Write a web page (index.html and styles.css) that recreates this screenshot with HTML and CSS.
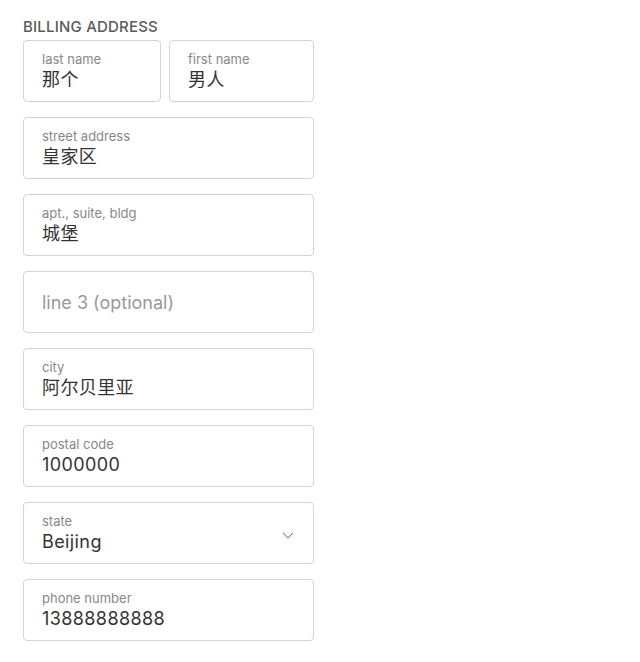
FILE: index.html
```html
<!DOCTYPE HTML>
<html>
<head>
    <title>Billing address</title>
    <meta charset="utf-8">
    <link rel="stylesheet" href="styles.css">
</head>
<body>
    <div class="billing">
        <h3>Billing Address</h3>
        <div class="row">
            <div class="field">
                <span class="label">last name</span>
                <span class="value">那个</span>
            </div>
            <div class="field">
                <span class="label">first name</span>
                <span class="value">男人</span>
            </div>
        </div>
        <div class="field">
            <span class="label">street address</span>
            <span class="value">皇家区</span>
        </div>
        <div class="field">
            <span class="label">apt., suite, bldg</span>
            <span class="value">城堡</span>
        </div>
        <div class="field empty">
            <span class="placeholder">line 3 (optional)</span>
        </div>
        <div class="field">
            <span class="label">city</span>
            <span class="value">阿尔贝里亚</span>
        </div>
        <div class="field">
            <span class="label">postal code</span>
            <span class="value">1000000</span>
        </div>
        <div class="field select">
            <div>
                <span class="label">state</span>
                <span class="value">Beijing</span>
            </div>
            <svg class="chevron" width="12" height="7" viewBox="0 0 12 7">
                <path d="M0.8 0.8 L6 5.8 L11.2 0.8" fill="none" stroke="#8a8a8a" stroke-width="1.1"/>
            </svg>
        </div>
        <div class="field">
            <span class="label">phone number</span>
            <span class="value">13888888888</span>
        </div>
    </div>
</body>
</html>
```

FILE: styles.css
```css
body
{
    margin: 0;
    background: #fff;
    font-family: Inter, "Noto Sans CJK SC", sans-serif;
    color: #333;
}

div.billing
{
    width: 291px;
    padding: 18px 0 0 23px;
    display: flex;
    flex-direction: column;
    gap: 15px;
}

div.billing h3
{
    margin: 0 0 -10px 0;
    font-size: 15px;
    line-height: 17px;
    font-weight: 500;
    letter-spacing: 0.2px;
    text-transform: uppercase;
    color: #5a5a5a;
}

div.row
{
    display: flex;
    gap: 8px;
}

div.row div.field:first-child { width: 138px; flex: none; }
div.row div.field:last-child { flex: 1; }

div.field
{
    box-sizing: border-box;
    height: 62px;
    padding: 10px 18px 0 18px;
    border: 1px solid #d4d4d4;
    border-radius: 4px;
    display: flex;
    flex-direction: column;
}

div.field span.label
{
    display: block;
    font-size: 13px;
    line-height: 16px;
    color: #888;
}

div.field span.value
{
    display: block;
    margin-top: 1px;
    font-size: 18px;
    line-height: 24px;
    letter-spacing: 0.4px;
    color: #333;
}

div.field.empty
{
    padding-top: 0;
    justify-content: center;
}

div.field span.placeholder
{
    font-size: 18px;
    color: #999;
}

div.field.select
{
    flex-direction: row;
    justify-content: space-between;
    align-items: flex-start;
}

div.field.select svg.chevron
{
    margin: 19px 1px 0 0;
}
```
